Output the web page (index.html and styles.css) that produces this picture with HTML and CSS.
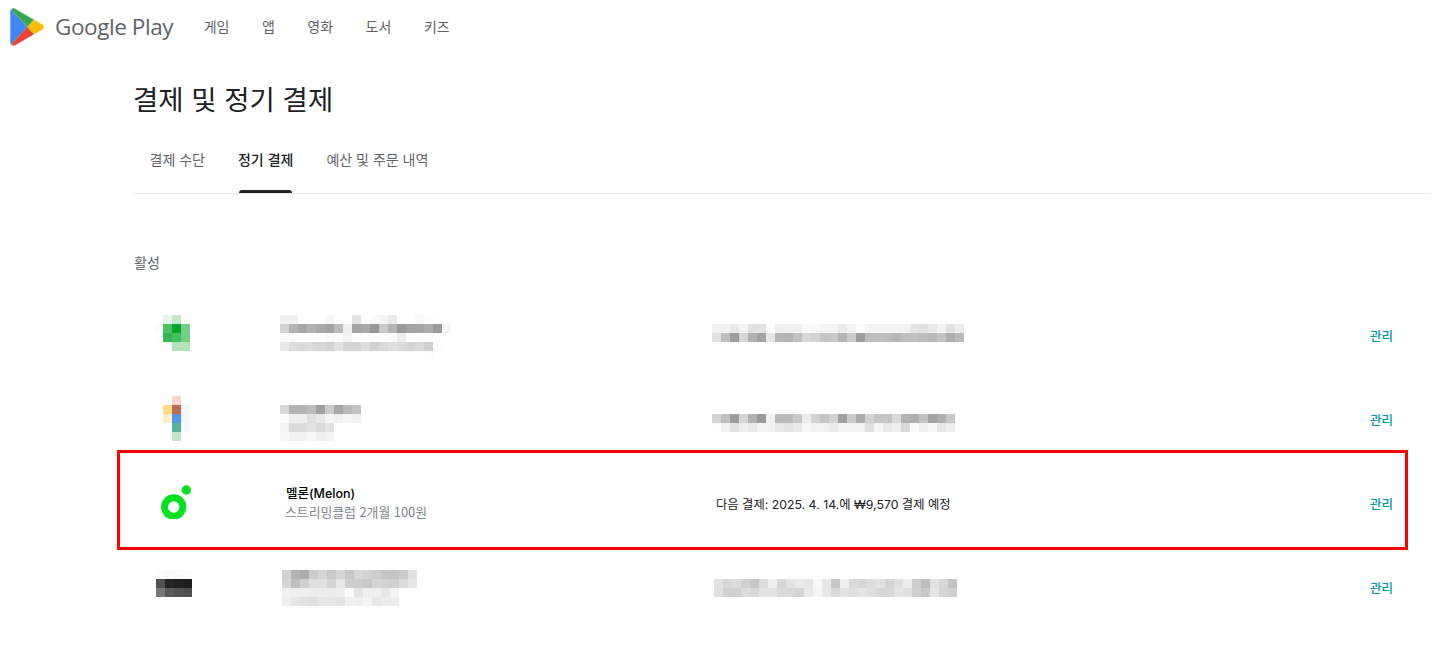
FILE: index.html
```html
<!DOCTYPE html>
<html lang="ko">
<head>
<meta charset="utf-8">
<title>결제 및 정기 결제</title>
<link rel="stylesheet" href="styles.css">
</head>
<body>
<header class="topbar">
  <a class="brand" href="#">
    <svg class="play-logo" viewBox="0 0 36 38" width="36" height="38" aria-hidden="true">
      <path fill="#4285f4" d="M1.1 1.4C.6 2 .3 2.7.3 3.6v30.8c0 .9.3 1.6.8 2.2L17.4 19z"/>
      <path fill="#34a853" d="M1.1 1.4C1.9.4 3.5 0 5 .8l19 10.9L17.4 19z"/>
      <path fill="#ea4335" d="M1.1 36.6c.8 1 2.4 1.4 3.9.6l19-10.9-6.6-7.3z"/>
      <path fill="#fbbc04" d="M24 11.7l8.4 4.9c2 1.2 2 3.6 0 4.8L24 26.3 17.4 19z"/>
    </svg>
    <span class="brand-name">Google Play</span>
  </a>
  <nav class="main-nav">
    <a href="#">게임</a>
    <a href="#">앱</a>
    <a href="#">영화</a>
    <a href="#">도서</a>
    <a href="#">키즈</a>
  </nav>
</header>

<main class="content">
  <h1 class="page-title">결제 및 정기 결제</h1>
  <nav class="tabs">
    <a class="tab" href="#">결제 수단</a>
    <a class="tab tab-active" href="#">정기 결제</a>
    <a class="tab" href="#">예산 및 주문 내역</a>
  </nav>
  <h2 class="section-label">활성</h2>

  <section class="sub-list">
    <div class="sub-row">
      <div class="mosaic" data-left="21" data-top="21" data-cells="- e6f5ea c2e9cb fafdfa/f8fcf9 4fc063 00a82d 74d089/fcfdfc 33b552 46bd60 6fcd85/- - b3e3b9 b3e3b9"></div>
      <div class="mosaic" data-left="0" data-top="21" data-cells="f0 f0 - - - f7 - - e3 - f9 f4 e8 - - f9 fc - -/d2 b3 a6 b3 a9 a3 bc f0 a5 aa 96 c9 b4 9a a3 a4 ad 9b f5/fa fa - - - fb - f3 - - - - fa ee - - fc - -/e8 dc da dc d8 d3 e2 d5 d5 dc d1 d9 df d9 d5 d9 d0 fd -/- - - - - - - - - - - - - - - - fc - -"></div>
      <div class="mosaic" data-left="0" data-top="30" data-cells="f1 f1 ea f4 e2 e2 fd f0 f0 f0 fa f8 f5 f5 ea f3 fb f3 f3 f3 f3 f3 e5 e2 e8 f3 e2 ed/e2 c0 9c d5 b2 a3 e6 b7 b4 c1 d8 d3 c6 c8 b5 cc 9e bd bf bd b7 c0 c1 bc b9 c2 af bb"></div>
      <a class="manage" href="#">관리</a>
    </div>
    <div class="sub-row">
      <div class="mosaic" data-left="30" data-top="18" data-cells="- fdd3ce -/fedc82 b96a58 f6f6fd/fdeec5 5595ea f4f7fd/- 57b097 f4f8fd/- c0e5cb fcfdfc"></div>
      <div class="mosaic" data-left="0" data-top="27" data-cells="d9 b3 b4 bb a0 ca a8 b8 c2/fc ef ef df e8 f4 ef f6 f0/f4 dc dc e2 d9 e2 - - -/f6 f1 f1 f8 f0 f3 - - -"></div>
      <div class="mosaic" data-left="0" data-top="36" data-cells="d4 c0 9c d5 b0 9a f0 bb bb c8 ec d2 c5 d2 a0 cb ac d2 c3 c4 da b3 ae c2 a3 af c8/fe f1 e2 ee e9 f2 f2 e7 e3 e9 f8 f2 f2 ea f2 f2 f2 e0 f6 e8 ef d9 f9 ed f8 e5 ee"></div>
      <a class="manage" href="#">관리</a>
    </div>
    <div class="sub-row">
      <svg class="melon-logo" viewBox="0 0 32 34" width="32" height="34" aria-hidden="true">
        <circle cx="13.7" cy="22" r="9.2" fill="none" stroke="#06e21f" stroke-width="7"/>
        <circle cx="26.3" cy="5" r="4.7" fill="#06e21f"/>
      </svg>
      <div class="sub-name">
        <div class="sub-title">멜론(Melon)</div>
        <div class="sub-plan">스트리밍클럽 2개월 100원</div>
      </div>
      <div class="sub-desc">다음 결제: 2025. 4. 14.에 ₩9,570 결제 예정</div>
      <a class="manage" href="#">관리</a>
    </div>
    <div class="sub-row">
      <div class="mosaic" data-left="23" data-top="24" data-cells="fc fa f9 fb/50 25 20 1f/78 59 52 4f"></div>
      <div class="mosaic" data-left="2" data-top="24" data-cells="d2 b3 ac cb d6 c9 d6 c8 d8 d3 cd c5 c5 cb e2/d6 bf d0 e0 e2 d5 e7 ce ce c8 d6 d2 cf dc e7/f0 ef ef ed ed ec ee fc e4 f0 ef e6 f3 - -/ee e6 e3 e0 e6 e6 e4 f0 ee f4 e8 ec ee - -"></div>
      <div class="mosaic" data-left="2" data-top="33" data-cells="e2 d6 dc d0 c6 dc ef d6 e3 ea e6 f8 e6 c6 ee da d5 dd e2 d5 e0 ec cd bd e2 d7 c2/e0 d0 d0 dc d7 e4 e2 da d8 d4 e8 f5 e6 d9 e2 de e4 de d8 d8 e4 e0 d0 c8 e5 d7 d0"></div>
      <a class="manage" href="#">관리</a>
    </div>
  </section>
</main>

<div class="highlight-box" aria-hidden="true"></div>
<script src="mosaic.js"></script>
</body>
</html>
```
FILE: styles.css
```css
* { box-sizing: border-box; }

html, body { margin: 0; padding: 0; background: #fff; }

body {
  position: relative;
  height: 659px;
  overflow: hidden;
  font-family: "Noto Sans CJK KR", "Noto Sans", sans-serif;
  color: #202124;
}

a { color: inherit; text-decoration: none; }

.topbar {
  display: flex;
  align-items: center;
  height: 54px;
  padding-left: 10px;
}

.brand { display: flex; align-items: center; gap: 9px; }

.play-logo { display: block; }

.brand-name {
  font-family: "Open Sans", sans-serif;
  font-size: 22.5px;
  letter-spacing: -0.42px;
  color: #5f6368;
  margin-bottom: 2px;
}

.main-nav {
  display: flex;
  gap: 32.5px;
  margin: 0 0 2px 30.5px;
  font-size: 14px;
  color: #5f6368;
}

.content { padding: 0 6px 0 133px; }

.page-title {
  margin: 26px 0 0;
  font-size: 27.5px;
  line-height: 36px;
  font-weight: 400;
  color: #202124;
}

.tabs {
  display: flex;
  height: 51px;
  margin-top: 27px;
  border-bottom: 1px solid #e8eaed;
}

.tab {
  display: flex;
  flex-direction: column;
  justify-content: space-between;
  height: 50px;
  padding: 6px 16.5px 0;
  font-size: 14px;
  line-height: 20px;
  color: #5f6368;
}

.tab-active { font-weight: 500; color: #202124; }

.tab-active::after {
  content: "";
  display: block;
  height: 3px;
  margin: 0 1.5px;
  border-radius: 3px 3px 0 0;
  background: #202124;
}

.section-label {
  margin: 58px 0 0 1px;
  font-size: 14px;
  line-height: 20px;
  font-weight: 400;
  color: #5f6368;
}

.sub-list { margin-top: 22px; }

.sub-row {
  display: grid;
  grid-template-columns: 147px 432px 1fr 60px;
  height: 84px;
}

.mosaic {
  display: grid;
  grid-auto-rows: 9px;
  grid-auto-columns: 9px;
  align-self: start;
  justify-self: start;
}

.mosaic-cell { width: 9px; height: 9px; }

.melon-logo { display: block; margin: 23px 0 0 27px; }

.sub-name {
  align-self: center;
  padding-left: 6px;
  margin-bottom: 2px;
}

.sub-title {
  font-family: "Inter", "Noto Sans CJK KR", sans-serif;
  font-size: 12.5px;
  line-height: 18px;
  font-weight: 500;
  color: #000;
}

.sub-plan {
  font-size: 12.85px;
  line-height: 18px;
  color: #80868b;
  margin-left: -1px;
}

.sub-desc {
  align-self: center;
  padding-left: 4px;
  margin-top: 1px;
  font-family: "Inter", "Noto Sans CJK KR", sans-serif;
  font-size: 12.3px;
  line-height: 18px;
  color: #202124;
}

.manage {
  align-self: center;
  font-size: 12.5px;
  line-height: 18px;
  font-weight: 500;
  color: #0097a7;
}

.highlight-box {
  position: absolute;
  left: 117px;
  top: 450px;
  width: 1291px;
  height: 100px;
  border: 3px solid #f00;
}
```
FILE: mosaic.js
```js
document.querySelectorAll('.mosaic').forEach(function (m) {
  m.style.marginLeft = m.dataset.left + 'px';
  m.style.marginTop = m.dataset.top + 'px';
  m.dataset.cells.split('/').forEach(function (row, r) {
    row.trim().split(' ').forEach(function (hex, c) {
      var cell = document.createElement('div');
      cell.className = 'mosaic-cell';
      cell.style.gridRow = r + 1;
      cell.style.gridColumn = c + 1;
      if (hex !== '-') {
        cell.style.background = '#' + (hex.length === 2 ? hex + hex + hex : hex);
      }
      m.appendChild(cell);
    });
  });
});
```
